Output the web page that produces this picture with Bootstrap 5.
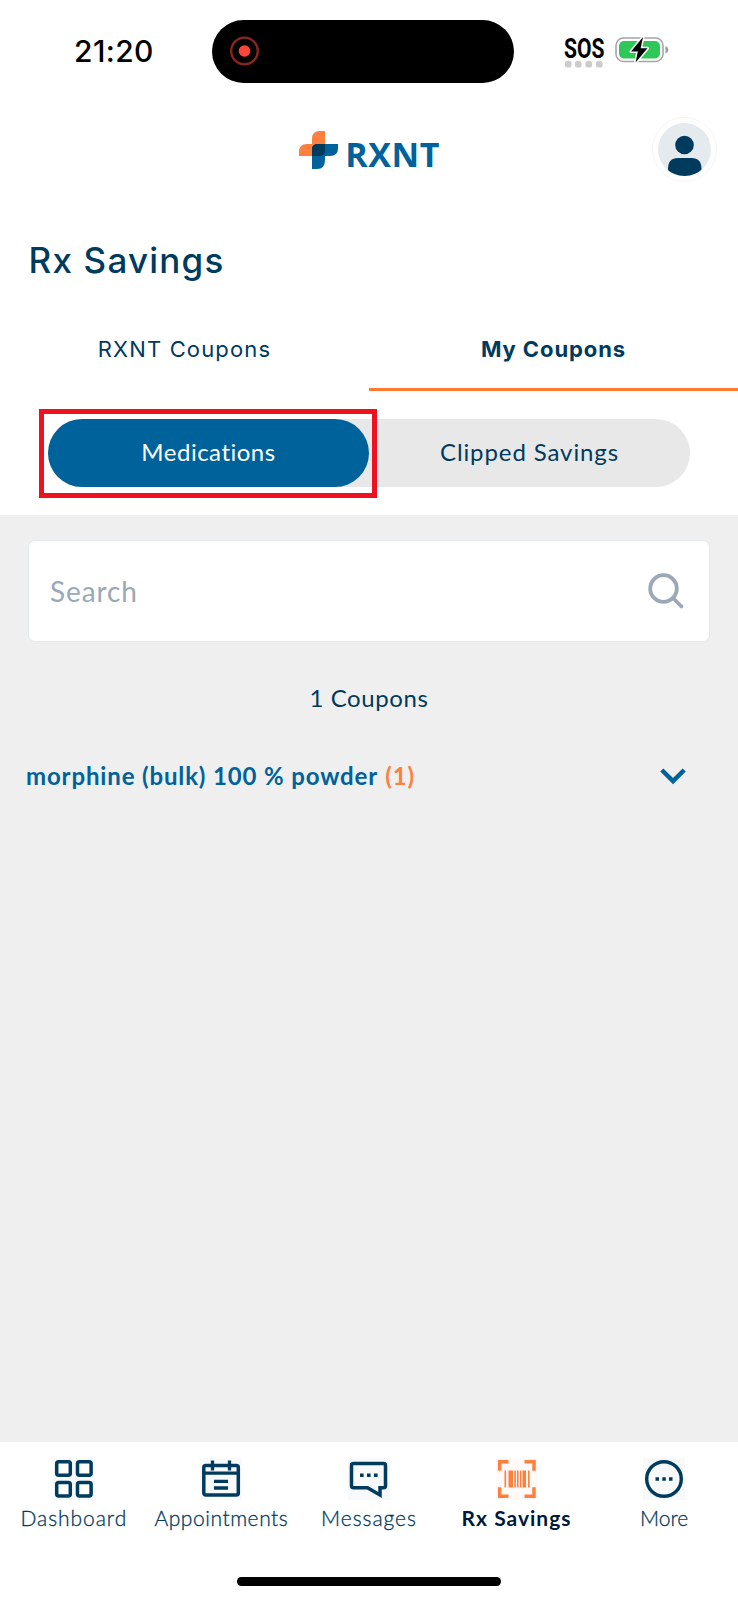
<!DOCTYPE html>
<html lang="en">
<head>
<meta charset="utf-8">
<meta name="viewport" content="width=device-width, initial-scale=1">
<title>Rx Savings</title>
<link href="https://cdn.jsdelivr.net/npm/bootstrap@5.3.0/dist/css/bootstrap.min.css" rel="stylesheet">
<style>
  :root { --navy: #003a5d; --blue: #00629b; --orange: #ff7f3e; }
  body { font-family: Lato, "Open Sans", sans-serif; color: var(--navy); background: #fff; }
  .screen { height: 1600px; overflow: hidden; }
  .status-bar { height: 100px; padding: 19.5px 0 0 74px; color: #000; }
  .clock { font: 500 30px/63px Inter, sans-serif; width: 138px; letter-spacing: .4px; }
  .island { width: 302px; height: 63px; border-radius: 32px; background: #000; padding-left: 17px; }
  .sos { width: 42px; margin-left: 50px; padding-top: 15px; }
  .sos-text { font: 700 27px/28px Roboto, sans-serif; transform: scaleX(.78); transform-origin: 0 0; width: 52px; height: 26px; }
  .battery { margin: 16.5px 0 0 9px; }
  .brand-bar { height: 118px; }
  .logo-side { width: 440px; }
  .logo-mark { margin: 30px 7px 0 0; }
  .brand-text { font: 700 34px/36px "Open Sans", sans-serif; letter-spacing: .6px; color: var(--blue); padding-top: 36px; }
  .avatar { width: 65px; height: 65px; border: 1px solid #f4f5f6; padding: 5px; margin: 17px 0 0 212px; }
  .page-title { font: 500 35px/44px Inter, sans-serif; padding: 20px 0 0 28.5px; height: 92px; letter-spacing: 1.2px; margin: 0; }
  .tabs { height: 81px; font: 400 22px/78px Inter, sans-serif; letter-spacing: 1.15px; }
  .tabs .nav-link { color: inherit; padding: 0; border-bottom: 3px solid transparent; height: 81px; }
  .tabs .nav-link.active { font-weight: 700; border-color: #ff7a30; letter-spacing: .9px; }
  .switch-wrap { padding: 28px 48px 28px; height: 124px; }
  .switch { height: 68px; border-radius: 34px; background: #e8e8e8; font-size: 24px; line-height: 65px; letter-spacing: .9px; }
  .switch .on { border-radius: 34px; background: var(--blue); color: #fff; letter-spacing: .5px; }
  .highlight { border: 5px solid #ee1120; left: -9px; top: -10px; width: 338px; height: 89px; }
  .content { background: #efefef; height: 927px; padding-top: 25px; }
  .search { margin: 0 28px; height: 102px; border: 1px solid #e2e9ef; border-radius: 7px; background: #fff; font-size: 28px; letter-spacing: .9px; color: #9aa8b7; padding: 0 24px 0 21px; }
  .count { font-size: 24px; line-height: 36px; margin-top: 38px; letter-spacing: .6px; }
  .drug { font-size: 24px; font-weight: 700; line-height: 36px; margin-top: 42px; padding: 0 52.5px 0 26px; color: var(--blue); letter-spacing: .86px; }
  .drug .num { color: var(--orange); margin-left: 1px; }
  .bottom-nav { height: 158px; padding-top: 16px; }
  .bottom-nav .item { width: 20%; font-size: 21px; font-weight: 300; line-height: 26px; letter-spacing: .95px; -webkit-text-stroke: .3px currentColor; white-space: nowrap; }
  .bottom-nav .item.tight { letter-spacing: .55px; }
  .bottom-nav .item.short { letter-spacing: 0; }
  .bottom-nav .item.current { font-weight: 700; color: #001a3a; letter-spacing: 1px; -webkit-text-stroke: 0; }
  .bottom-nav svg { display: block; margin: 0 auto 5px; }
  .home-bar { width: 264px; height: 9px; border-radius: 5px; background: #000; margin-top: 46px; }
</style>
</head>
<body>
<div class="screen d-flex flex-column">
  <div class="status-bar d-flex align-items-start">
    <div class="clock"><span>21:20</span></div>
    <div class="island d-flex align-items-center">
      <svg width="32" height="32"><circle cx="15.5" cy="16" r="13.3" fill="none" stroke="#8b2520" stroke-width="2.3"/><circle cx="15.5" cy="16" r="5.8" fill="#ff453a"/></svg>
    </div>
    <div class="sos">
      <div class="sos-text"><span>SOS</span></div>
      <svg class="d-block" width="40" height="8" fill="#ccc"><rect x="1" y="0" width="6.5" height="6.5" rx="2"/><rect x="11" y="0" width="6.5" height="6.5" rx="2"/><rect x="21.5" y="0" width="6.5" height="6.5" rx="2"/><rect x="32" y="0" width="6.5" height="6.5" rx="2"/></svg>
    </div>
    <svg class="battery" width="56" height="28" viewBox="0 0 56 28"><rect x="1" y="2" width="47" height="23.5" rx="7.5" fill="#fff" stroke="#a5a5a5" stroke-width="1.6"/><path d="M50.5 10v7.500q2.800-1 2.800-3.750t-2.800-3.750z" fill="#999"/><rect x="4" y="5" width="41" height="17.500" rx="5" fill="#30c759"/><path d="M28 1L16 15.500h6.800L20.600 26.500 32.500 12.300h-6.800z" fill="#000" stroke="#fff" stroke-width="3" paint-order="stroke" stroke-linejoin="round"/></svg>
  </div>

  <header class="brand-bar d-flex">
    <div class="logo-side d-flex justify-content-end">
      <svg class="logo-mark" width="40" height="40" viewBox="0 0 40 40"><path d="M14 14V9q0-8 8-8h5v20q0 5-6 5H1v-4q0-8 8-8z" fill="#ff7f3e"/><path d="M14 26V19q0-5 6-5h20v4q0 8-8 8h-5v4q0 9-8 9h-5z" fill="#00629b"/><path d="M14 26V19q0-5 6-5h7v6q0 6-6 6z" fill="#003a5d"/></svg>
      <div class="brand-text"><span>RXNT</span></div>
    </div>
    <div class="avatar rounded-circle">
      <svg class="d-block" width="53" height="53" viewBox="0 0 53 53"><clipPath id="round"><circle cx="26.500" cy="26.500" r="26.500"/></clipPath><g clip-path="url(#round)"><path d="M0 0h53v53H0z" fill="#e5eaee"/><circle cx="26.500" cy="22" r="9.300" fill="#003a5d"/><path d="M10 53v-7q0-11 10-11h13.500q10 0 10 11v7z" fill="#003a5d"/></g></svg>
    </div>
  </header>

  <h1 class="page-title"><span>Rx Savings</span></h1>

  <nav class="nav nav-fill tabs flex-nowrap">
    <a class="nav-link w-50"><span>RXNT Coupons</span></a>
    <a class="nav-link active w-50"><span>My Coupons</span></a>
  </nav>

  <div class="switch-wrap">
    <div class="switch d-flex position-relative text-center">
      <div class="on w-50"><span>Medications</span></div>
      <div class="w-50"><span>Clipped Savings</span></div>
      <div class="highlight position-absolute"></div>
    </div>
  </div>

  <main class="content">
    <div class="search d-flex align-items-center justify-content-between">
      <span>Search</span>
      <svg width="38" height="38" viewBox="0 0 38 38" fill="none" stroke="#9aa8b7" stroke-width="3.800" stroke-linecap="round"><circle cx="16.500" cy="16.500" r="13.300"/><path d="M26.500 26.500l8 8"/></svg>
    </div>
    <div class="count text-center"><span>1 Coupons</span></div>
    <div class="drug d-flex justify-content-between align-items-center">
      <div><span>morphine (bulk) 100 % powder</span> <span class="num">(1)</span></div>
      <svg width="26" height="18" viewBox="0 0 26 18" fill="none" stroke="#00629b" stroke-width="4.500"><path d="M1.800 3l11.200 11L24.200 3"/></svg>
    </div>
  </main>

  <footer class="bottom-nav">
    <div class="d-flex text-center">
      <div class="item">
        <svg width="42" height="42" viewBox="0 0 42 42"><path d="M0 0h42v42H0z" fill="#f7f9fb"/><g fill="#fff" stroke="#003a5d" stroke-width="3.500"><rect x="3.700" y="3.700" width="13.600" height="13.600" rx="2"/><rect x="24.500" y="3.700" width="13.600" height="13.600" rx="2"/><rect x="3.700" y="24.500" width="13.600" height="13.600" rx="2"/><rect x="24.500" y="24.500" width="13.600" height="13.600" rx="2"/></g></svg>
        <span>Dashboard</span>
      </div>
      <div class="item tight">
        <svg width="42" height="42" viewBox="0 0 42 42"><path d="M0 0h42v42H0z" fill="#f7f9fb"/><g fill="none" stroke="#003a5d" stroke-width="3.500"><rect x="3.800" y="7.500" width="34.500" height="29.500" rx="2"/><path d="M3 15.200h35M12.500 2.500v10M29.500 2.500v10M14 23.300h14M14 30h14" stroke-width="3.300"/></g></svg>
        <span>Appointments</span>
      </div>
      <div class="item">
        <svg width="42" height="42" viewBox="0 0 42 42"><path d="M0 0h42v42H0z" fill="#f7f9fb"/><path d="M5.500 5.500h30q2 0 2 2v20.300q0 2-2 2h-3.500v7.200L19.500 29.800h-14q-2 0-2-2V7.500q0-2 2-2z" fill="#f7f9fb" stroke="#003a5d" stroke-width="3.500"/><path d="M12 15.500h3.600v3.600H12zM19 15.500h3.600v3.600H19zM26 15.500h3.600v3.600H26z" fill="#003a5d"/></svg>
        <span>Messages</span>
      </div>
      <div class="item current">
        <svg width="42" height="42" viewBox="0 0 42 42"><path d="M0 0h42v42H0z" fill="#fffaf7"/><path d="M12.500 3.700H3.700v9M28.500 3.700h9.500v9M12.500 38.300H3.700v-9M28.500 38.300h9.500v-9" fill="none" stroke="#ff7f3e" stroke-width="3.500"/><path d="M8.500 12.500h1.600v17H8.500zM12.500 12.500h4.500v17h-4.500zM18.300 12.500h1.600v17h-1.600zM21 12.500h1.600v17H21zM24 12.500h1.400v17H24zM26.500 12.500h3.500v17h-3.500zM32 12.500h1.600v17H32z" fill="#ff7f3e"/></svg>
        <span>Rx Savings</span>
      </div>
      <div class="item short">
        <svg width="42" height="42" viewBox="0 0 42 42"><path d="M0 0h42v42H0z" fill="#f7f9fb"/><circle cx="21" cy="21" r="17.300" fill="#f7f9fb" stroke="#003a5d" stroke-width="3.400"/><path d="M12.500 19.300H16v3.500h-3.500zM19.300 19.300h3.500v3.500h-3.500zM26 19.300h3.500v3.500H26z" fill="#003a5d"/></svg>
        <span>More</span>
      </div>
    </div>
    <div class="home-bar mx-auto"></div>
  </footer>
</div>
<script src="https://cdn.jsdelivr.net/npm/bootstrap@5.3.0/dist/js/bootstrap.bundle.min.js"></script>
</body>
</html>
